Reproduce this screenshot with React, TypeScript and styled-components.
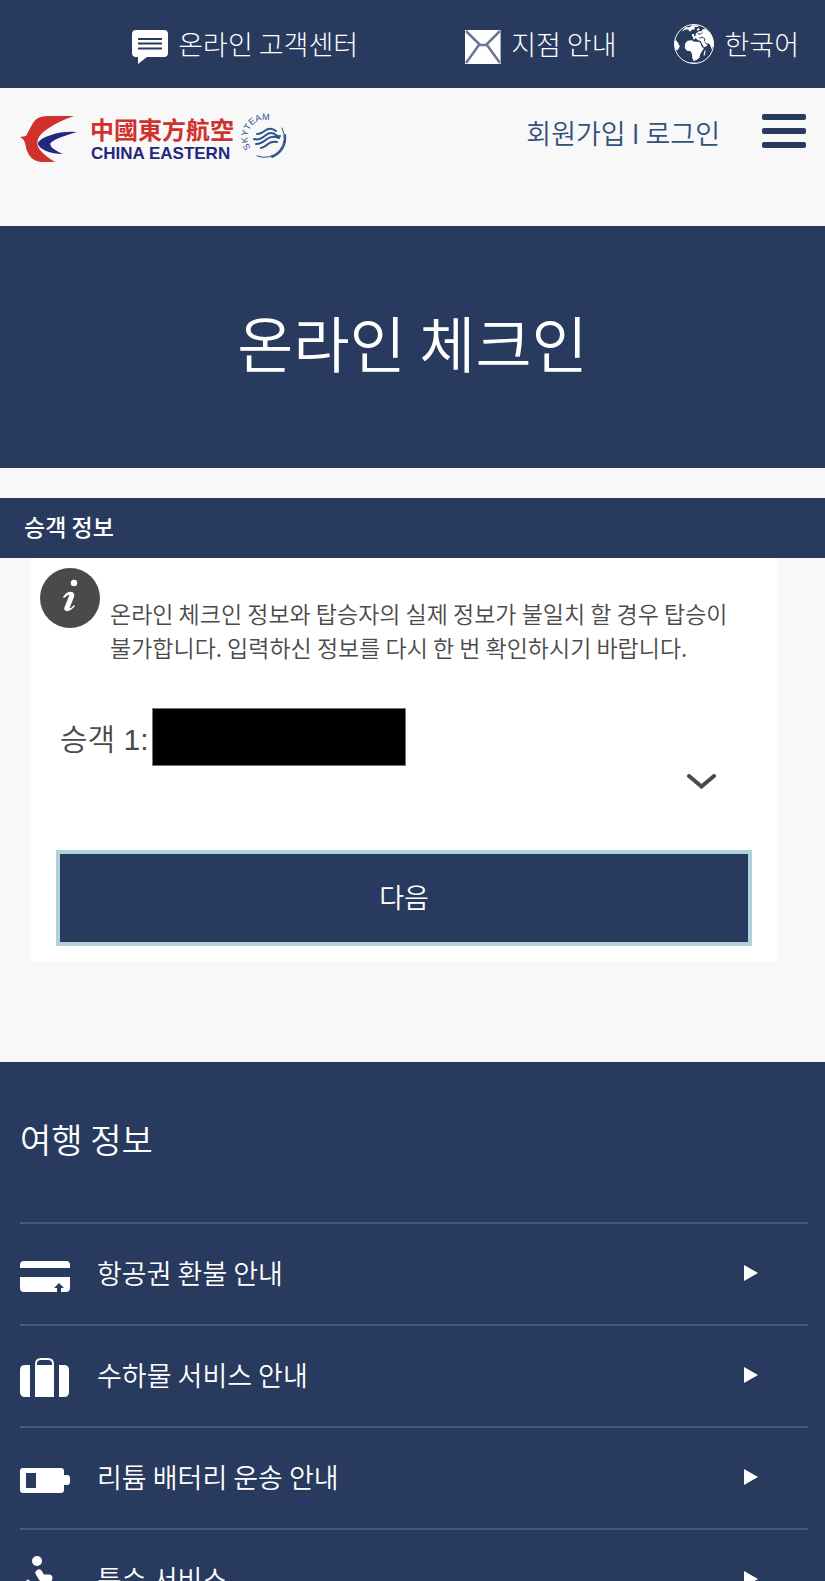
import React from 'react';
import styled, { createGlobalStyle } from 'styled-components';

const navy = '#283a5e';

const GlobalStyle = createGlobalStyle`
  *, *::before, *::after { box-sizing: border-box; }
  html { background: #f8f8f8; }
  body {
    margin: 0;
    color: #4a4a4a;
    font-family: 'Noto Sans CJK KR', 'Liberation Sans', sans-serif;
    font-weight: 350;
    word-break: keep-all;
  }
  a { color: inherit; text-decoration: none; }
  h1, h2, p, ul { margin: 0; padding: 0; font-weight: inherit; }
  svg { flex-shrink: 0; }
`;

const UtilityBar = styled.nav`
  display: flex;
  justify-content: flex-end;
  align-items: center;
  height: 88px;
  padding-right: 26px;
  background: ${navy};
  color: #fff;
`;

const UtilityLink = styled.a<{ $space: number }>`
  display: flex;
  align-items: center;
  gap: 10px;
  margin-left: ${(p) => p.$space}px;
  font-size: 27px;
  font-weight: 300;
  line-height: 40px;
  white-space: nowrap;
`;

const Header = styled.header`
  display: flex;
  align-items: flex-start;
  justify-content: space-between;
  height: 138px;
  padding: 20px 19px 0 20px;
`;

const HeaderActions = styled.div`
  display: flex;
  align-items: flex-start;
  gap: 42px;
  padding-top: 6px;
`;

const Account = styled.div`
  display: flex;
  gap: 6px;
  color: #35507f;
  font-size: 27px;
  line-height: 38px;
`;

const MenuButton = styled.button`
  display: flex;
  flex-direction: column;
  gap: 8px;
  width: 44px;
  padding: 0;
  border: 0;
  background: none;
`;

const MenuLine = styled.span`
  width: 100%;
  height: 6px;
  border-radius: 2px;
  background: ${navy};
`;

const Hero = styled.section`
  display: flex;
  justify-content: center;
  align-items: center;
  height: 242px;
  margin-bottom: 30px;
  padding-bottom: 10px;
  background: ${navy};
  color: #fff;
`;

const HeroTitle = styled.h1`
  font-size: 61px;
  line-height: 88px;
`;

const SectionTitle = styled.h2`
  padding: 10px 24px 14px;
  background: ${navy};
  color: #fff;
  font-size: 23px;
  font-weight: 500;
  line-height: 36px;
`;

const Card = styled.section`
  margin: 0 47px 100px 30px;
  padding: 10px 26px 16px;
  background: #fff;
`;

const Notice = styled.div`
  display: flex;
  gap: 10px;
  margin: 0 -16px 44px;
`;

const NoticeText = styled.p`
  padding: 28px 40px 0 0;
  font-size: 23px;
  line-height: 34px;
`;

const Passenger = styled.div`
  display: flex;
  align-items: center;
  gap: 3px;
  padding-left: 4px;
  font-family: 'Liberation Sans', 'Noto Sans CJK KR', sans-serif;
  font-size: 30px;
`;

const RedactedName = styled.span`
  width: 254px;
  height: 58px;
  border: 1px solid #777;
  background: #000;
`;

const ExpandButton = styled.button`
  display: block;
  margin: 8px 36px 61px auto;
  padding: 0;
  border: 0;
  background: none;
  line-height: 0;
`;

const NextButton = styled.button`
  display: block;
  width: 100%;
  height: 96px;
  padding-bottom: 4px;
  border: 4px solid #aed2d9;
  background: ${navy};
  color: #fff;
  font: inherit;
  font-size: 27px;
`;

const Footer = styled.footer`
  padding: 52px 17px 0 20px;
  background: ${navy};
  color: #fff;
`;

const FooterTitle = styled.h2`
  margin-bottom: 58px;
  font-size: 34px;
  line-height: 50px;
`;

const LinkList = styled.ul`
  list-style: none;
`;

const LinkRow = styled.a`
  display: grid;
  grid-template-columns: 50px 1fr 14px;
  column-gap: 27px;
  align-items: center;
  height: 102px;
  padding: 0 50px 2px 0;
  border-top: 2px solid #455a84;
  font-size: 27px;
  line-height: 40px;

  & > svg:first-child { margin-top: 6px; }
`;

const ChatIcon = () => (
  <svg width="36" height="40" viewBox="0 -6 36 40" aria-hidden="true">
    <path fill="#fff" d="M4 0h28q4 0 4 4v19q0 4-4 4H15l-9 7 0-7H4q-4 0-4-4V4q0-4 4-4Z" />
    <path stroke={navy} strokeWidth="2" d="M6 9h24M6 13.500h24M6 18.500h24" />
  </svg>
);

const MailIcon = () => (
  <svg width="36" height="40" viewBox="0 -6 36 40" aria-hidden="true">
    <path fill="#fff" d="M0 0h36v34H0z" />
    <path fill="none" stroke="#6c7690" strokeWidth="2.500" d="M1 1l14 14h6L35 1M1 33l13-18M35 33 22 15" />
    <path stroke="#a9b0bf" strokeWidth="1" d="M35.500 0v34" />
  </svg>
);

const GlobeIcon = () => (
  <svg width="40" height="40" viewBox="0 0 120 120" aria-hidden="true">
    <circle cx="60" cy="60" r="58.500" fill="none" stroke="#fff" strokeWidth="3" />
    <g fill="#fff">
      <path d="M34 58 41 50 53 49 61 53 70 53 78 55 84 70 90 72 83 83 79 90 76 101 68 108 59 111 55 103 54 91 50 82 39 80 32 72Z" />
      <path d="M57 44 58 37 65 35 65 29 74 22 83 22 84 17 93 14 108 26 117 44 119 63 113 76 108 62 101 57 99 66 90 70 84 60 80 51 72 49 64 41 61 47Z" />
      <path d="M23 23 34 10 46 10 56 3 76 5 71 9 61 9 63 16 53 17 49 23 41 16 32 18Z" />
      <path d="M1 55 5 47 11 55 17 67 12 78 4 78Z" />
      <path d="M54 30h6v8h-6zM68 16l7-4 2 5-7 3zM90 84l5-7-2 15-4 5zM35 115q23 5 47-3-20 5-47 3Z" />
    </g>
    <path fill="none" stroke={navy} strokeWidth="3" d="M71 29 79 31 85 25M76 42 86 40 93 45 91 51M92 53 101 63" />
  </svg>
);

const Logo = () => (
  <svg width="268" height="66" viewBox="0 -8 268 66" role="img" aria-label="China Eastern">
    <path fill="#d0312d" d="M27 0H54Q40 5 32 10 20 17 18 23 16 29 20 34 25 40 35 46H21Q13 45 9 39 6 34 5 27 4 23 0 21L6 20Q9 14 13 7 17 0 27 0Z" />
    <path fill="#24277f" d="M57 16Q42 15 31 19 18 23 18 28C19 33 30 38 43 38Q31 33 30 28 32 23 57 16Z" />
    <text x="70" y="23" fill="#d0312d" fontFamily="'Noto Sans CJK TC', sans-serif" fontSize="24" fontWeight="700">中國東方航空</text>
    <text x="71" y="43" fill="#24277f" fontFamily="'Liberation Sans', sans-serif" fontSize="17" fontWeight="700">CHINA EASTERN</text>
    <path id="skyteam-arc" fill="none" d="M231 32A17 17 0 0 1 259 11" />
    <text fill="#2d5289" fontFamily="'Liberation Sans', sans-serif" fontSize="9">
      <textPath href="#skyteam-arc">SKYTEAM</textPath>
    </text>
    <g fill="none" stroke="#2d5289" strokeLinecap="round">
      <path strokeWidth="1" d="M262 12A20 20 0 0 1 237 40" />
      <path strokeWidth="2" d="M265 19A20 20 0 0 1 252 41" />
      <path strokeWidth="2" d="M237 18q4 0 9-4 5-3 10 1M234 23q5 2 12-4 5-4 10 0 2 2 4 1M236 28q5 0 11-5 5-4 12-1M241 32q4-1 7-4 4-3 9-2" />
    </g>
  </svg>
);

const InfoIcon = () => (
  <svg width="60" height="60" viewBox="0 0 60 60" aria-hidden="true">
    <circle cx="30" cy="30" r="30" fill="#4a4a4a" />
    <circle cx="34" cy="15" r="3.200" fill="#fff" />
    <path fill="#fff" d="M23 29Q27 23 32 24q3 1 2 5l-4 10q-1 2 1 1l3-3 1 1q-5 6-9 5-3-1-1-5l4-10q1-2-1-1l-4 3Z" />
  </svg>
);

const ChevronIcon = () => (
  <svg width="29" height="15" viewBox="0 0 29 15" aria-hidden="true">
    <path d="M2 2l12.500 10.500L27 2" fill="none" stroke="#4a4a4a" strokeWidth="4" strokeLinecap="round" />
  </svg>
);

const RefundIcon = () => (
  <svg width="50" height="31" viewBox="0 0 50 31" aria-hidden="true">
    <path fill="#fff" d="M4 0h42q4 0 4 4v3H0V4q0-4 4-4ZM0 16h50v11q0 4-4 4h-5v-4h3l-5-5-5 5h3v4H4q-4 0-4-4Z" />
  </svg>
);

const LuggageIcon = () => (
  <svg width="50" height="40" viewBox="0 0 50 40" aria-hidden="true">
    <path fill="#fff" d="M5 7h5v32H5q-5 0-5-5V12q0-5 5-5ZM39 7h5q5 0 5 5v22q0 5-5 5h-5ZM15 7h19v32H15Z" />
    <path fill="none" stroke="#fff" strokeWidth="2" d="M16 8V6q0-5 5-5h7q5 0 5 5v2" />
    <path fill={navy} d="M17 7q0-4 4-4h7q4 0 4 4Z" />
  </svg>
);

const BatteryIcon = () => (
  <svg width="50" height="25" viewBox="0 0 50 25" aria-hidden="true">
    <path fill="#fff" fillRule="evenodd" d="M3 0h38q3 0 3 3v4h3q3 0 3 3v4q0 3-3 3h-3v5q0 3-3 3H3q-3 0-3-3V3q0-3 3-3ZM6 5v15h10V5Z" />
  </svg>
);

const AssistIcon = () => (
  <svg width="50" height="53" viewBox="0 0 50 53" aria-hidden="true">
    <circle cx="17" cy="5" r="5" fill="#fff" />
    <path fill="none" stroke="#fff" strokeWidth="7" strokeLinecap="round" strokeLinejoin="round" d="M19 17l3 5h7l-6 14h11l6 12" />
    <path fill="none" stroke="#fff" strokeWidth="3" strokeLinecap="round" d="M8 25A14 14 0 1 0 30 44" />
  </svg>
);

const ArrowIcon = () => (
  <svg width="14" height="16" viewBox="0 0 14 16" aria-hidden="true">
    <path fill="#fff" d="M0 0l14 8-14 8Z" />
  </svg>
);

const travelLinks = [
  { label: '항공권 환불 안내', Icon: RefundIcon },
  { label: '수하물 서비스 안내', Icon: LuggageIcon },
  { label: '리튬 배터리 운송 안내', Icon: BatteryIcon },
  { label: '특수 서비스', Icon: AssistIcon },
];

export default function App() {
  return (
    <>
      <GlobalStyle />
      <UtilityBar>
        <UtilityLink href="#support" $space={0}><ChatIcon />온라인 고객센터</UtilityLink>
        <UtilityLink href="#branches" $space={107}><MailIcon />지점 안내</UtilityLink>
        <UtilityLink href="#language" $space={58}><GlobeIcon />한국어</UtilityLink>
      </UtilityBar>
      <Header>
        <a href="#home"><Logo /></a>
        <HeaderActions>
          <Account>
            <a href="#join">회원가입</a>
            <span>I</span>
            <a href="#login">로그인</a>
          </Account>
          <MenuButton type="button" aria-label="메뉴"><MenuLine /><MenuLine /><MenuLine /></MenuButton>
        </HeaderActions>
      </Header>
      <main>
        <Hero><HeroTitle>온라인 체크인</HeroTitle></Hero>
        <SectionTitle>승객 정보</SectionTitle>
        <Card>
          <Notice>
            <InfoIcon />
            <NoticeText>
              온라인 체크인 정보와 탑승자의 실제 정보가 불일치 할 경우 탑승이 불가합니다. 입력하신 정보를 다시 한 번 확인하시기 바랍니다.
            </NoticeText>
          </Notice>
          <Passenger>승객 1:<RedactedName /></Passenger>
          <ExpandButton type="button" aria-label="펼치기"><ChevronIcon /></ExpandButton>
          <NextButton type="button">다음</NextButton>
        </Card>
      </main>
      <Footer>
        <FooterTitle>여행 정보</FooterTitle>
        <LinkList>
          {travelLinks.map(({ label, Icon }) => (
            <li key={label}><LinkRow href="#travel"><Icon />{label}<ArrowIcon /></LinkRow></li>
          ))}
        </LinkList>
      </Footer>
    </>
  );
}
